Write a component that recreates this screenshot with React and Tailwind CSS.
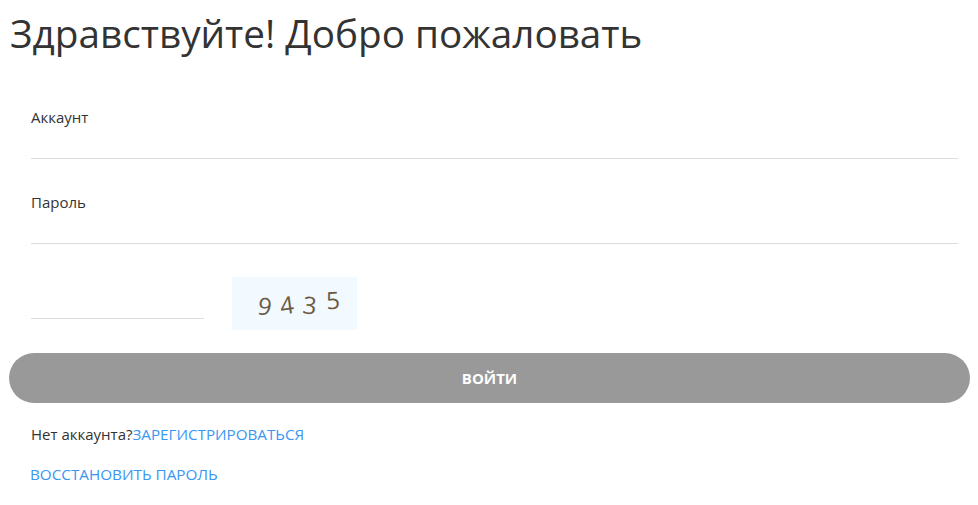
const CAPTCHA = [
  { digit: '9', className: 'rotate-[10deg] translate-y-[2px]' },
  { digit: '4', className: '-rotate-[8deg] translate-y-[1px]' },
  { digit: '3', className: 'rotate-[6deg] translate-y-[1px]' },
  { digit: '5', className: '-rotate-[4deg] -translate-y-[4px]' },
]

function Field({ label }) {
  return (
    <div className="ml-[31px] mr-[20px] h-[85px] border-b border-[#dcdcdc] pt-[33px]">
      <label className="block text-[15px] leading-[20px] text-[#333]">{label}</label>
    </div>
  )
}

export default function App() {
  return (
    <div className="h-[505px] w-[978px] overflow-hidden bg-white font-['Open_Sans','Noto_Sans',sans-serif] text-[#333]">
      <h1 className="pl-[10px] pt-[8px] text-[38.7px] leading-[50px] font-normal text-[#333]">
        Здравствуйте! Добро пожаловать
      </h1>

      <div className="mt-[16px]">
        <Field label="Аккаунт" />
        <Field label="Пароль" />
      </div>

      <div className="mt-[33px] ml-[31px] flex items-end">
        <div className="h-[42px] w-[173px] border-b border-[#dcdcdc]" />
        <div className="ml-[28px] -mb-[11px] flex h-[53px] w-[125px] items-center justify-center gap-[9px] bg-[#f3faff] pl-[8px] text-[24px] font-normal text-[#6b5a45]">
          {CAPTCHA.map((c) => (
            <span key={c.digit} className={`inline-block ${c.className}`}>
              {c.digit}
            </span>
          ))}
        </div>
      </div>

      <button className="mt-[34px] ml-[9px] block h-[50px] w-[961px] rounded-full bg-[#999] text-[15px] font-bold text-white">
        ВОЙТИ
      </button>

      <p className="mt-[21px] ml-[31px] text-[15px] leading-[20px] text-[#333]">
        Нет аккаунта?<a className="text-[15.2px] text-[#3a96f3]">ЗАРЕГИСТРИРОВАТЬСЯ</a>
      </p>
      <p className="mt-[20px] ml-[30px] leading-[20px]">
        <a className="text-[15.25px] text-[#3a96f3]">ВОССТАНОВИТЬ ПАРОЛЬ</a>
      </p>
    </div>
  )
}
